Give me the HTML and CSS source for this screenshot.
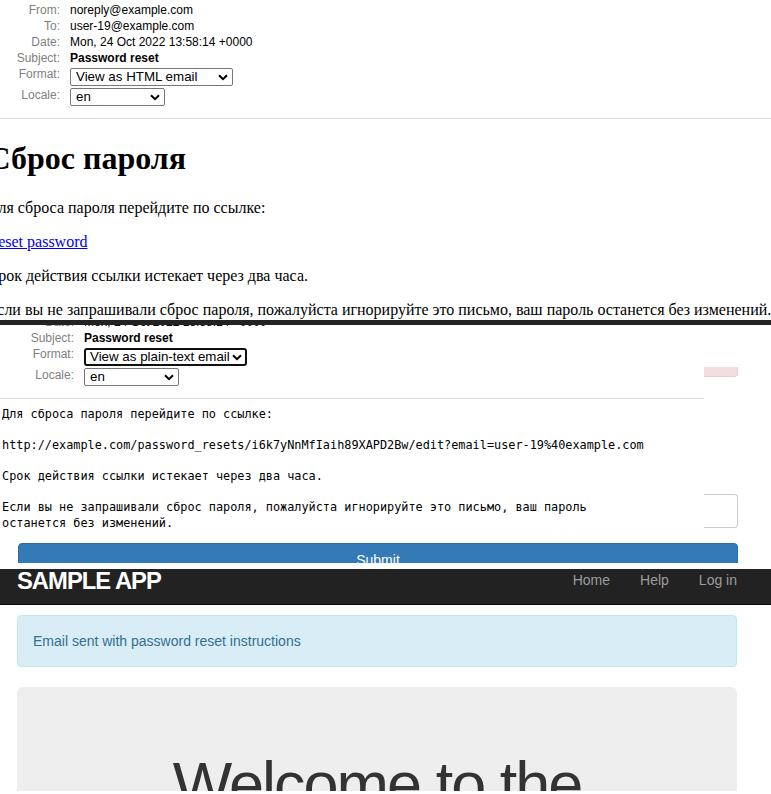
FILE: index.html
```html
<!DOCTYPE html>
<html lang="ru">
<head>
<meta charset="utf-8">
<title>Password reset</title>
<link rel="stylesheet" href="styles.css">
</head>
<body>
<div class="shot shot1">
  <header class="mailhead">
    <dl class="meta">
      <dt>From:</dt><dd>noreply@example.com</dd>
      <dt>To:</dt><dd>user-19@example.com</dd>
      <dt>Date:</dt><dd>Mon, 24 Oct 2022 13:58:14 +0000</dd>
      <dt>Subject:</dt><dd><strong>Password reset</strong></dd>
      <dt class="frow">Format:</dt>
      <dd class="frow"><div class="fsel wide"><span>View as HTML email</span><svg width="10" height="7" viewBox="0 0 10 7"><path d="M1 1.2 L5 5.2 L9 1.2" fill="none" stroke="#000" stroke-width="2"/></svg></div></dd>
      <dt class="lrow">Locale:</dt>
      <dd class="lrow"><div class="fsel narrow"><span>en</span><svg width="10" height="7" viewBox="0 0 10 7"><path d="M1 1.2 L5 5.2 L9 1.2" fill="none" stroke="#000" stroke-width="2"/></svg></div></dd>
    </dl>
  </header>
  <div class="mailbody">
    <h1>Сброс пароля</h1>
    <p>Для сброса пароля перейдите по ссылке:</p>
    <p><a href="#">Reset password</a></p>
    <p>Срок действия ссылки истекает через два часа.</p>
    <p>Если вы не запрашивали сброс пароля, пожалуйста игнорируйте это письмо, ваш пароль останется без изменений.</p>
  </div>
</div>
<div class="bar"></div>
<div class="shot shot2">
  <div class="stage">
    <div class="preview">
      <header class="mailhead alt">
        <dl class="meta">
          <dt>From:</dt><dd>noreply@example.com</dd>
          <dt>To:</dt><dd>user-19@example.com</dd>
          <dt>Date:</dt><dd>Mon, 24 Oct 2022 13:58:14 +0000</dd>
          <dt>Subject:</dt><dd><strong>Password reset</strong></dd>
          <dt class="frow">Format:</dt>
          <dd class="frow"><div class="fsel wide focus"><span>View as plain-text email</span><svg width="10" height="7" viewBox="0 0 10 7"><path d="M1 1.2 L5 5.2 L9 1.2" fill="none" stroke="#000" stroke-width="2"/></svg></div></dd>
          <dt class="lrow">Locale:</dt>
          <dd class="lrow"><div class="fsel narrow"><span>en</span><svg width="10" height="7" viewBox="0 0 10 7"><path d="M1 1.2 L5 5.2 L9 1.2" fill="none" stroke="#000" stroke-width="2"/></svg></div></dd>
        </dl>
      </header>
<pre class="plain">Для сброса пароля перейдите по ссылке:

http://example.com/password_resets/i6k7yNnMfIaih89XAPD2Bw/edit?email=user-19%40example.com

Срок действия ссылки истекает через два часа.

Если вы не запрашивали сброс пароля, пожалуйста игнорируйте это письмо, ваш пароль
останется без изменений.</pre>
    </div>
    <div class="behind">
      <div class="pinkbit"></div>
      <div class="inputbit"></div>
    </div>
  </div>
  <div class="submit">Submit</div>
</div>
<div class="gap"></div>
<div class="shot shot3">
  <nav class="navbar">
    <a class="logo" href="#">Sample App</a>
    <ul class="nav">
      <li>Home</li>
      <li>Help</li>
      <li>Log in</li>
    </ul>
  </nav>
  <div class="container">
    <div class="alert">Email sent with password reset instructions</div>
    <div class="jumbotron">
      <h1>Welcome to the</h1>
    </div>
  </div>
</div>
</body>
</html>
```
FILE: styles.css
```css
* { box-sizing: border-box; }
html, body { margin: 0; padding: 0; background: #fff; }
body { width: 771px; overflow: hidden; }

.shot { overflow: hidden; }
.shot1 { height: 320px; }
.bar { height: 5px; background: #222; }
.shot2 { height: 238px; }
.gap { height: 6px; }
.shot3 { height: 222px; }

/* mail preview header */
.mailhead {
  font: 12px/14px "Liberation Sans", Arial, sans-serif;
  color: #000;
  padding-top: 2px;
  padding-bottom: 11px;
  border-bottom: 1px solid #dedede;
}
.meta {
  display: grid;
  grid-template-columns: 60px auto;
  column-gap: 10px;
  margin: 0;
}
.meta dt { text-align: right; color: #7f7f7f; padding: 1px 0; }
.meta dd { margin: 0; padding: 1px 0; }
.meta dd.frow { padding: 2px 0 1px; }
.meta dd.lrow { padding: 1px 0 1px; }

.fsel {
  display: flex;
  align-items: center;
  justify-content: space-between;
  height: 18px;
  border: 1px solid #767676;
  border-radius: 2px;
  padding: 0 4px 0 5px;
  font: 13.33px/16px "Liberation Sans", Arial, sans-serif;
  color: #000;
  background: #fff;
}
.fsel svg { display: block; }
.fsel.wide { width: 163px; }
.fsel.narrow { width: 95px; }
.fsel.focus { border: 2px solid #101010; border-radius: 3px; padding: 0 3px 0 4px; }

.alt { margin-top: -45px; width: 704px; }
.alt .meta { grid-template-columns: 74px auto; }

/* html email body */
.mailbody {
  margin-left: -12.5px;
  font-family: "Liberation Serif", "Times New Roman", serif;
  white-space: nowrap;
  color: #000;
}
.mailbody h1 { font-size: 32px; font-weight: bold; margin: 21.44px 0; line-height: normal; }
.mailbody p { font-size: 16px; margin: 16px 0; line-height: normal; }
.mailbody a { color: #0000ee; text-decoration: underline; }

/* plain text */
.stage { display: flex; height: 218px; }
.preview { width: 704px; }
.plain {
  margin: 8px 0 0 2px;
  font: 11.85px/15.5px "DejaVu Sans Mono", monospace;
  color: #000;
}
.behind { width: 34px; padding-top: 42px; }
.pinkbit {
  height: 10px;
  background: #f2dede;
  border-bottom: 1px solid #ebccd1;
  border-right: 1px solid #ebccd1;
  border-bottom-right-radius: 4px;
}
.inputbit {
  margin-top: 117px;
  height: 34px;
  border: 1px solid #ccc;
  border-left: none;
  border-radius: 0 4px 4px 0;
}
.submit {
  margin: 0 33px 0 18px;
  height: 34px;
  background: #337ab7;
  border: 1px solid #2e6da4;
  border-radius: 4px;
  color: #fff;
  font: 14px/20px "Liberation Sans", Arial, sans-serif;
  padding: 6px 12px;
  text-align: center;
}

/* sample app */
.navbar {
  height: 36px;
  background: #222;
  border-bottom: 1px solid #080808;
  display: flex;
  justify-content: space-between;
  align-items: flex-start;
  padding: 0 19px 0 17px;
}
.logo {
  font: bold 23.8px/24px "Liberation Sans", Arial, sans-serif;
  letter-spacing: -1px;
  color: #fff;
  text-transform: uppercase;
  text-decoration: none;
}
.nav { display: flex; list-style: none; margin: 1px 0 0; padding: 0; }
.nav li {
  padding: 0 15px;
  font: 14px/20px "Liberation Sans", Arial, sans-serif;
  color: #9d9d9d;
}
.container { padding: 10px 34px 0 17px; }
.alert {
  padding: 15px;
  border: 1px solid #bce8f1;
  background: #d9edf7;
  color: #31708f;
  border-radius: 4px;
  font: 14px/20px "Liberation Sans", Arial, sans-serif;
  margin-bottom: 20px;
}
.jumbotron {
  background: #eee;
  border-radius: 6px;
  padding: 63px 0 48px;
  height: 300px;
}
.jumbotron h1 {
  margin: 0;
  font: 500 63px/1.1 "Liberation Sans", Arial, sans-serif;
  letter-spacing: -2px;
  color: #333;
  text-align: center;
}
```
